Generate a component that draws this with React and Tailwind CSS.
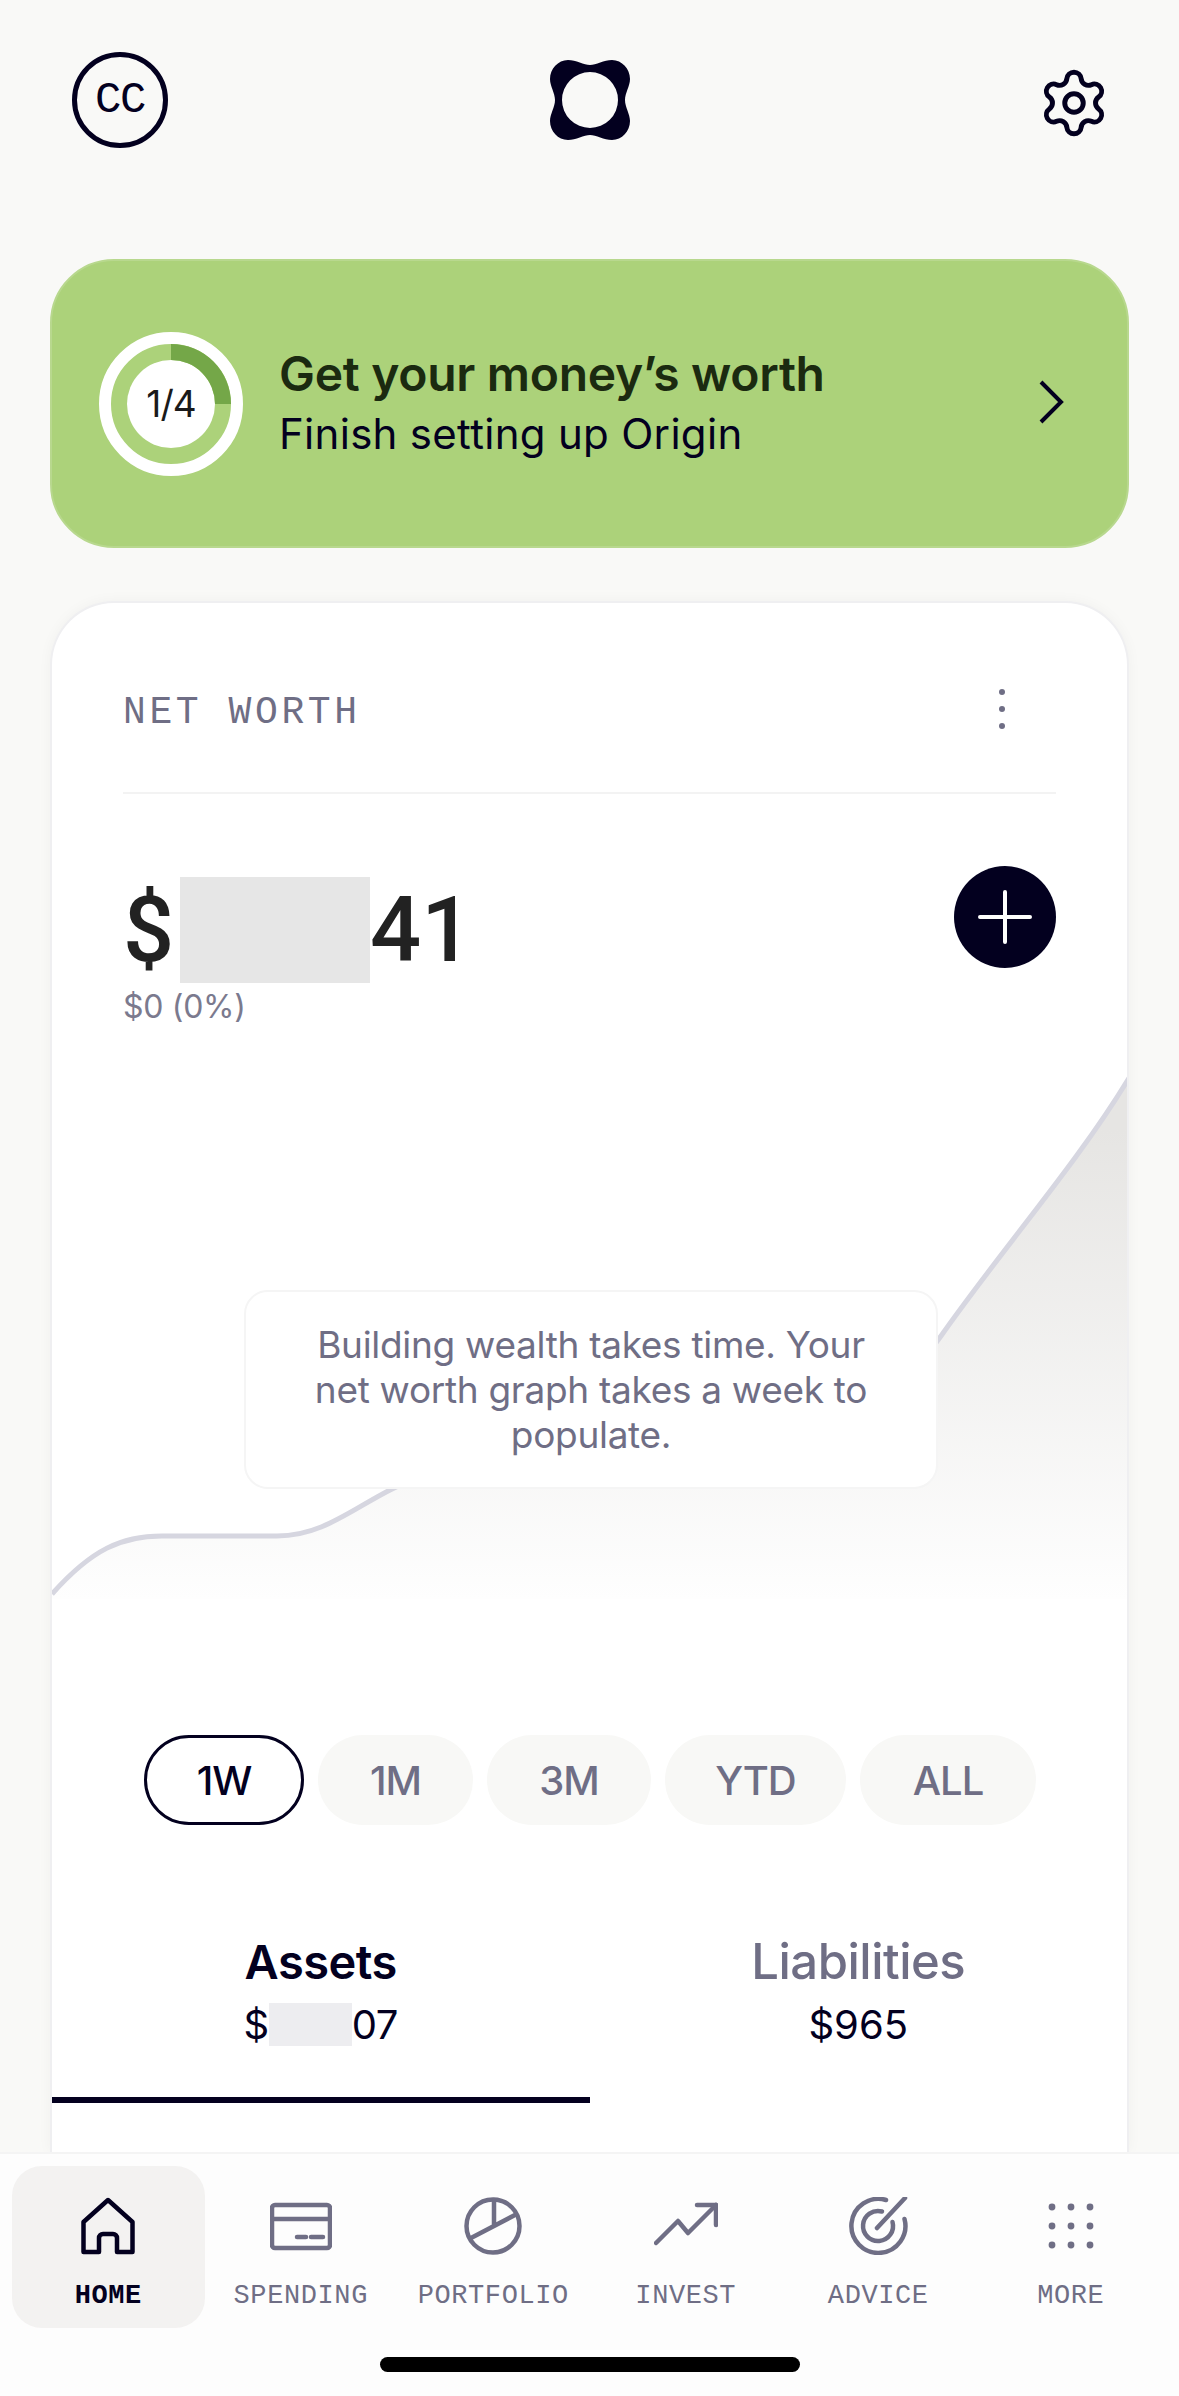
import { Settings } from 'lucide-react';

const ranges = [
    { label: '1W', width: 'w-[160px]', active: true },
    { label: '1M', width: 'w-[155px]' },
    { label: '3M', width: 'w-[164px]' },
    { label: 'YTD', width: 'w-[181px]' },
    { label: 'ALL', width: 'w-[176px]' },
];

function Logo() {
    return (
        <svg width="80" height="80" viewBox="0 0 80 80" className="justify-self-center">
            <path
                fill="#03001f"
                fillRule="evenodd"
                d="M40 5C34 5 26 0 18 0 8 0 0 9 0 19c0 7 5 14 5 21S0 54 0 61c0 10 8 19 18 19 8 0 16-5 22-5s14 5 22 5c10 0 18-9 18-19 0-7-5-14-5-21s5-14 5-21C80 9 72 0 62 0 54 0 46 5 40 5ZM40 12a28 28 0 1 0 0 56 28 28 0 1 0 0-56Z"
            />
        </svg>
    );
}

function ProgressRing() {
    return (
        <div className="relative w-[144px] h-[144px] shrink-0">
            <svg width="144" height="144" viewBox="0 0 144 144">
                <circle cx="72" cy="72" r="66" fill="none" stroke="#ffffff" strokeWidth="12" />
                <circle cx="72" cy="72" r="44" fill="#ffffff" />
                <path d="M72 12A60 60 0 0 1 132 72H116A44 44 0 0 0 72 28Z" fill="#74a748" />
            </svg>
            <div className="absolute inset-0 flex items-center justify-center font-['Inter'] text-[37px] tracking-[-1px] text-[#1a1a1a]">1/4</div>
        </div>
    );
}

function HomeIcon() {
    return (
        <svg width="54" height="58" viewBox="0 0 54 58" fill="none" stroke="#03001f" strokeWidth="4.5" strokeLinejoin="round">
            <path d="M2.5 25L27 3l24.5 22v30H36V41a4 4 0 0 0-4-4H22a4 4 0 0 0-4 4v14H2.5Z" />
        </svg>
    );
}

function SpendingIcon() {
    return (
        <svg width="62" height="58" viewBox="0 0 62 58" fill="none" stroke="#6f6e85" strokeWidth="4.5">
            <rect x="2" y="8" width="58" height="43" rx="3" />
            <path d="M2 22H60" />
            <path d="M27 40H36M41 40H53" strokeLinecap="round" />
        </svg>
    );
}

function PortfolioIcon() {
    return (
        <svg width="58" height="58" viewBox="0 0 58 58" fill="none" stroke="#6f6e85" strokeWidth="4.5" strokeLinecap="round">
            <circle cx="29" cy="29" r="26.5" />
            <path d="M30 3V28M7 41L51 18" />
        </svg>
    );
}

function InvestIcon() {
    return (
        <svg width="64" height="58" viewBox="0 0 64 58" fill="none" stroke="#6f6e85" strokeWidth="4.5" strokeLinecap="round" strokeLinejoin="round">
            <path d="M2 46L24 24l10 12L62 8" />
            <path d="M43 8H62V28" />
        </svg>
    );
}

function AdviceIcon() {
    return (
        <svg width="60" height="58" viewBox="0 0 60 58" fill="none" stroke="#6f6e85" strokeWidth="4.5" strokeLinecap="round">
            <path d="M38 3A27 27 0 1 0 56.500 22" />
            <path d="M34 14.500A15 15 0 1 0 44.500 25" />
            <path d="M29 31L57 1" />
        </svg>
    );
}

function MoreIcon() {
    const dots = [];
    [10, 29, 48].forEach((y) => {
        [7, 26, 45].forEach((x) => {
            dots.push(<circle key={`${x}-${y}`} cx={x} cy={y} r="3.400" fill="#6f6e85" />);
        });
    });
    return (
        <svg width="52" height="58" viewBox="0 0 52 58">
            {dots}
        </svg>
    );
}

const tabs = [
    { label: 'HOME', icon: <HomeIcon />, active: true },
    { label: 'SPENDING', icon: <SpendingIcon /> },
    { label: 'PORTFOLIO', icon: <PortfolioIcon /> },
    { label: 'INVEST', icon: <InvestIcon /> },
    { label: 'ADVICE', icon: <AdviceIcon /> },
    { label: 'MORE', icon: <MoreIcon /> },
];

function Chart() {
    const line = 'M0 525C40 480 70 467 110 467L225 467C270 467 300 440 340 420C480 350 800 395 889 267C950 180 1025 95 1077 9';
    return (
        <div className="relative h-[530px]">
            <svg width="1077" height="530" viewBox="0 0 1077 530" className="block">
                <defs>
                    <linearGradient id="chartFill" gradientUnits="userSpaceOnUse" x1="0" y1="60" x2="0" y2="530">
                        <stop offset="0" stopColor="#e6e5e3" />
                        <stop offset="1" stopColor="#fefefe" />
                    </linearGradient>
                </defs>
                <path d={`${line}V530H0Z`} fill="url(#chartFill)" />
                <path d={line} fill="none" stroke="#d6d6e0" strokeWidth="5" />
            </svg>
            {/* tooltip sits over the graph */}
            <div className="absolute left-[192px] top-[221px] w-[694px] h-[199px] flex items-center justify-center bg-white border-2 border-[#f5f5f5] rounded-[24px] px-[48px] text-center font-['Inter'] text-[37px] leading-[45px] tracking-[-0.3px] text-[#6f6e85]">
                Building wealth takes time. Your net worth graph takes a week to populate.
            </div>
        </div>
    );
}

export default function App() {
    return (
        <div className="h-[2396px] w-[1179px] flex flex-col overflow-hidden bg-[#f9f9f7] font-['Inter']">
            {/* Top bar */}
            <div className="h-[259px] shrink-0 grid grid-cols-3 items-start pt-[52px] px-[72px]">
                <div className="w-[96px] h-[96px] rounded-full border-[5px] border-[#03001f] flex items-center justify-center font-['Liberation_Mono'] text-[44px] tracking-[-1.5px] text-[#03001f]">CC</div>
                <div className="justify-self-center pt-[8px]">
                    <Logo />
                </div>
                <div className="justify-self-end pt-[14px] mr-[-4px]">
                    <Settings size={74} strokeWidth={1.6} color="#03001f" />
                </div>
            </div>

            {/* Setup banner */}
            <div className="mx-[50px] h-[289px] shrink-0 flex items-center rounded-[64px] bg-[#acd27a] border-2 border-[#b8d88e] pl-[47px] pr-[63px]">
                <ProgressRing />
                <div className="ml-[36px] flex-1 -mt-[4px]">
                    <div className="text-[48px] leading-[64px] font-semibold tracking-[-0.3px] text-[#1b2a10]">Get your money’s worth</div>
                    <div className="text-[42px] leading-[56px] tracking-[0.3px] text-[#03001f]">Finish setting up Origin</div>
                </div>
                <svg width="26" height="44" viewBox="0 0 26 44" fill="none" stroke="#03001f" strokeWidth="4" className="mb-[4px]">
                    <path d="M3 2L23 22L3 42" />
                </svg>
            </div>

            {/* Net worth card */}
            <div className="mx-[50px] mt-[53px] flex-1 min-h-0 overflow-hidden rounded-t-[64px] bg-white border-x-2 border-t-2 border-[#efeff1] shadow-[0_0_14px_rgba(0,0,0,0.04)]">
                <div className="pl-[71px] pr-[71px]">
                    <div className="pt-[86px] pb-[55px] border-b-2 border-[#f3f3f3] flex items-center justify-between">
                        <span className="font-['Liberation_Mono'] text-[38px] leading-[48px] tracking-[3.600px] text-[#6f6e85]">NET WORTH</span>
                        <svg width="10" height="44" viewBox="0 0 10 44" className="mr-[49px] -mt-[8px]" fill="#6f6e85">
                            <circle cx="5" cy="5" r="3" />
                            <circle cx="5" cy="22" r="3" />
                            <circle cx="5" cy="39" r="3" />
                        </svg>
                    </div>

                    <div className="flex items-start justify-between mt-[72px]">
                        <div className="mt-[11px]">
                            <div className="flex items-center h-[106px] font-['Roboto'] font-medium text-[90px] text-[#222222]">
                                <span className="w-[57px]">$</span>
                                <div className="w-[190px] h-[106px] bg-[#e6e6e6]" />
                                <span>41</span>
                            </div>
                            <div className="mt-[3px] text-[32px] leading-[42px] tracking-[-0.3px] text-[#7b7a8e]">$0 (0%)</div>
                        </div>
                        <div className="w-[102px] h-[102px] rounded-full bg-[#03001f] flex items-center justify-center">
                            <svg width="54" height="54" viewBox="0 0 54 54" stroke="#ffffff" strokeWidth="4" strokeLinecap="round">
                                <path d="M27 2V52M2 27H52" />
                            </svg>
                        </div>
                    </div>
                </div>

                <div className="mt-[41px]">
                    <Chart />
                </div>

                {/* Range pills */}
                <div className="mt-[136px] flex gap-[14px] pl-[92px]">
                    {ranges.map((range) => (
                        <div
                            key={range.label}
                            className={`${range.width} h-[90px] pt-[2px] rounded-[45px] flex items-center justify-center text-[40px] font-medium tracking-[-1px] ${range.active ? 'border-[3px] border-[#03001f] text-[#03001f]' : 'bg-[#f8f8f6] text-[#6f6e85]'}`}
                        >
                            {range.label}
                        </div>
                    ))}
                </div>

                {/* Assets / liabilities */}
                <div className="mt-[112px] grid grid-cols-2">
                    <div className="h-[166px] border-b-[6px] border-[#03001f] flex flex-col items-center text-[#03001f]">
                        <div className="text-[47px] leading-[50px] font-semibold tracking-[-0.5px]">Assets</div>
                        <div className="mt-[16px] flex items-center h-[43px] text-[40px] tracking-[-0.5px]">
                            <span>$</span>
                            <div className="w-[83px] h-[43px] bg-[#ededf0]" />
                            <span>07</span>
                        </div>
                    </div>
                    <div className="h-[166px] flex flex-col items-center">
                        <div className="text-[49px] leading-[50px] font-medium tracking-[-0.5px] text-[#6f6e85]">Liabilities</div>
                        <div className="mt-[16px] flex items-center h-[43px] text-[40px] text-[#03001f]">$965</div>
                    </div>
                </div>
            </div>

            {/* Bottom nav */}
            <div className="h-[244px] shrink-0 bg-[#fdfdfd] border-t-2 border-[#f4f4f4] px-[12px] pt-[12px]">
                <div className="grid grid-cols-6">
                    {tabs.map((tab) => (
                        <div
                            key={tab.label}
                            className={`h-[162px] rounded-[30px] flex flex-col items-center pt-[31px] ${tab.active ? 'bg-[#f3f2f1]' : ''}`}
                        >
                            {tab.icon}
                            <span className={`mt-[25px] font-['Liberation_Mono'] text-[27px] leading-[32px] tracking-[0.6px] ${tab.active ? 'font-bold text-[#03001f]' : 'text-[#6f6e85]'}`}>{tab.label}</span>
                        </div>
                    ))}
                </div>
                <div className="mx-auto mt-[29px] w-[420px] h-[15px] rounded-full bg-black" />
            </div>
        </div>
    );
}
